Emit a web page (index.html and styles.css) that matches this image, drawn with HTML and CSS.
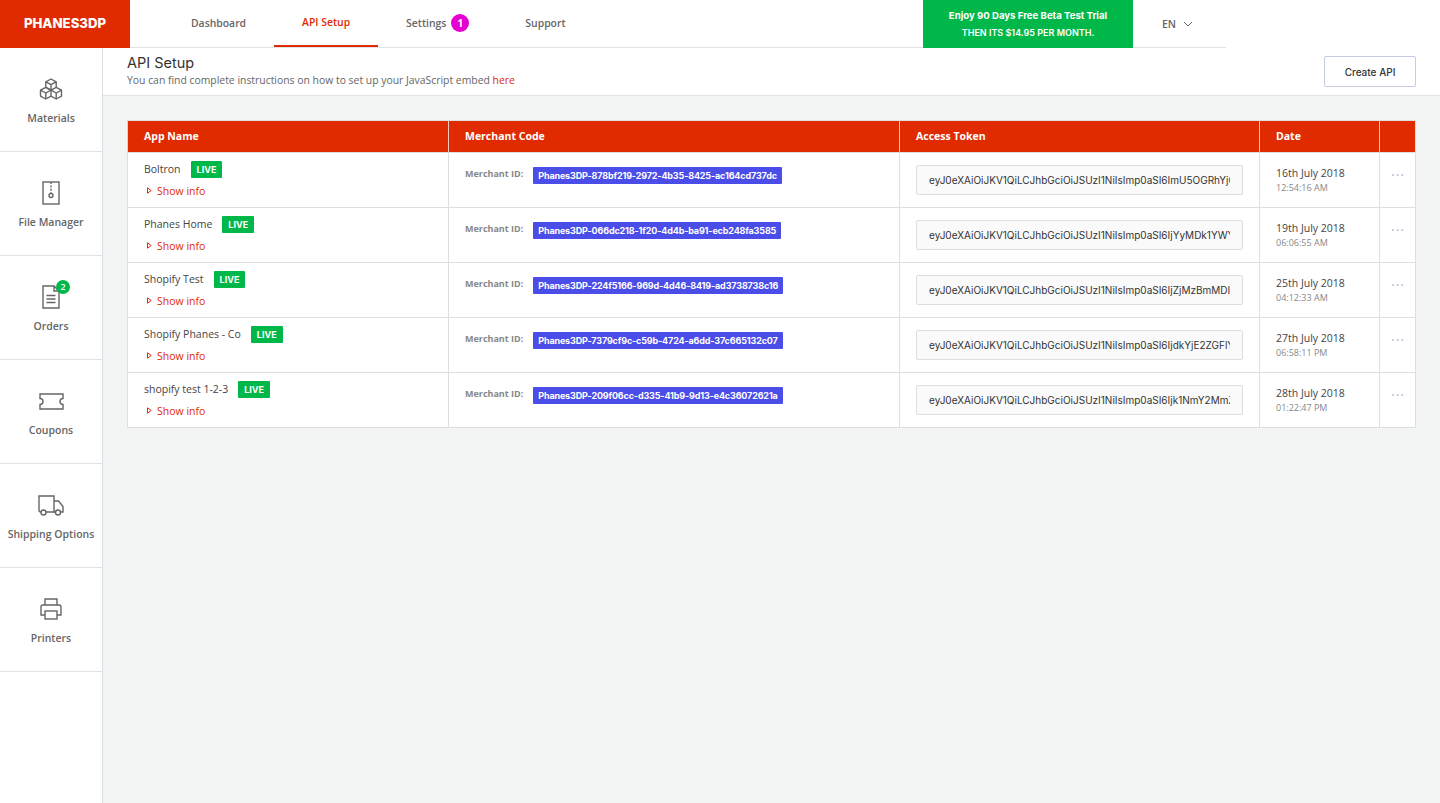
FILE: index.html
```html
<!DOCTYPE html>
<html lang="en">
<head>
    <meta charset="UTF-8">
    <meta name="viewport" content="width=device-width, initial-scale=1.0">
    <title>API Setup</title>
    <link rel="stylesheet" href="styles.css">
</head>
<body>
    <header class="topbar">
        <a class="logo" href="#">PHANES3DP</a>
        <nav class="main-nav">
            <a class="nav-link" href="#">Dashboard</a>
            <a class="nav-link active" href="#">API Setup</a>
            <a class="nav-link" href="#">Settings <span class="nav-badge">1</span></a>
            <a class="nav-link" href="#">Support</a>
        </nav>
        <div class="trial-box">
            <strong>Enjoy 90 Days Free Beta Test Trial</strong>
            <span>THEN ITS $14.95 PER MONTH.</span>
        </div>
        <div class="lang-select">
            EN
            <svg width="10" height="6" viewBox="0 0 10 6"><path d="M1 1l4 4 4-4" fill="none" stroke="#666" stroke-width="1"/></svg>
        </div>
    </header>

    <div class="layout">
        <aside class="sidebar">
            <a class="side-item" href="#">
                <span class="side-icon">
                    <svg width="24" height="22" viewBox="0 0 24 22" fill="none" stroke="#666" stroke-width="1.4" stroke-linejoin="round">
                        <path d="M12 1l5.200 2.800v5.600L12 12.200 6.800 9.400V3.800z"/>
                        <path d="M6.800 3.800L12 6.600l5.200-2.800M12 6.600v5.600"/>
                        <path d="M6.800 9.400L12 12.200v6L6.800 21l-5.300-2.800v-6z"/>
                        <path d="M1.500 12.200L6.800 15 12 12.200M6.800 15v6"/>
                        <path d="M17.200 9.400l5.300 2.800v6L17.200 21 12 18.200"/>
                        <path d="M12 12.200l5.200 2.800 5.300-2.800M17.200 15v6"/>
                    </svg>
                </span>
                Materials
            </a>
            <a class="side-item" href="#">
                <span class="side-icon">
                    <svg width="18" height="24" viewBox="0 0 18 24" fill="none" stroke="#666" stroke-width="1.4">
                        <rect x="1" y="1" width="16" height="22"/>
                        <path d="M9 1v11" stroke-dasharray="2 1.400"/>
                        <circle cx="9" cy="14.500" r="2"/>
                    </svg>
                </span>
                File Manager
            </a>
            <a class="side-item" href="#">
                <span class="side-icon">
                    <svg width="18" height="24" viewBox="0 0 18 24" fill="none" stroke="#666" stroke-width="1.4">
                        <path d="M12 1H1v22h16V6z"/>
                        <path d="M12 1v5h5"/>
                        <path d="M4.500 10.500h9M4.500 14h9M4.500 17.500h9"/>
                    </svg>
                    <span class="side-badge">2</span>
                </span>
                Orders
            </a>
            <a class="side-item" href="#">
                <span class="side-icon">
                    <svg width="25" height="17" viewBox="0 0 25 17" fill="none" stroke="#666" stroke-width="1.4">
                        <path d="M1 1h23v4.500a3 3 0 0 0 0 6V16H1v-4.500a3 3 0 0 0 0-6z"/>
                    </svg>
                </span>
                Coupons
            </a>
            <a class="side-item" href="#">
                <span class="side-icon">
                    <svg width="26" height="21" viewBox="0 0 26 21" fill="none" stroke="#666" stroke-width="1.4">
                        <path d="M3 17H2.500A1.500 1.500 0 0 1 1 15.500V1h15v16H8"/>
                        <path d="M16 6h4.500l4.500 5.500V17h-3M18 17h-2"/>
                        <circle cx="5.500" cy="17.500" r="2.500"/>
                        <circle cx="20" cy="17.500" r="2.500"/>
                    </svg>
                </span>
                Shipping Options
            </a>
            <a class="side-item" href="#">
                <span class="side-icon">
                    <svg width="22" height="22" viewBox="0 0 22 22" fill="none" stroke="#666" stroke-width="1.4">
                        <path d="M5 7V1h12v6"/>
                        <path d="M5 17H1V9a2 2 0 0 1 2-2h16a2 2 0 0 1 2 2v8h-4"/>
                        <rect x="5" y="13" width="12" height="8"/>
                    </svg>
                </span>
                Printers
            </a>
        </aside>

        <main class="content">
            <div class="page-head">
                <div class="page-title">
                    <h1>API Setup</h1>
                    <p>You can find complete instructions on how to set up your JavaScript embed <a href="#">here</a></p>
                </div>
                <button class="create-btn">Create API</button>
            </div>

            <div class="table-wrap">
                <table class="api-table">
                    <colgroup>
                        <col class="col-name">
                        <col class="col-code">
                        <col class="col-token">
                        <col class="col-date">
                        <col class="col-more">
                    </colgroup>
                    <thead>
                        <tr>
                            <th>App Name</th>
                            <th>Merchant Code</th>
                            <th>Access Token</th>
                            <th>Date</th>
                            <th></th>
                        </tr>
                    </thead>
                    <tbody>
                        <tr>
                            <td>
                                <div class="app-name">Boltron <span class="live">LIVE</span></div>
                                <a class="show-info" href="#"><svg width="5" height="7" viewBox="0 0 5 7"><path d="M.5.800v5.400L4.200 3.500z" fill="none" stroke="#e02b00"/></svg>Show info</a>
                            </td>
                            <td>
                                <div class="merchant"><span class="merchant-label">Merchant ID:</span> <span class="merchant-code">Phanes3DP-878bf219-2972-4b35-8425-ac164cd737dc</span></div>
                            </td>
                            <td><input class="token" readonly value="eyJ0eXAiOiJKV1QiLCJhbGciOiJSUzI1NiIsImp0aSI6ImU5OGRhYjQ4MDk1"></td>
                            <td>
                                <div class="date">16th July 2018</div>
                                <div class="time">12:54:16 AM</div>
                            </td>
                            <td class="more-cell"><span class="more">···</span></td>
                        </tr>
                        <tr>
                            <td>
                                <div class="app-name">Phanes Home <span class="live">LIVE</span></div>
                                <a class="show-info" href="#"><svg width="5" height="7" viewBox="0 0 5 7"><path d="M.5.800v5.400L4.200 3.500z" fill="none" stroke="#e02b00"/></svg>Show info</a>
                            </td>
                            <td>
                                <div class="merchant"><span class="merchant-label">Merchant ID:</span> <span class="merchant-code">Phanes3DP-066dc218-1f20-4d4b-ba91-ecb248fa3585</span></div>
                            </td>
                            <td><input class="token" readonly value="eyJ0eXAiOiJKV1QiLCJhbGciOiJSUzI1NiIsImp0aSI6IjYyMDk1YWY4ZTk1"></td>
                            <td>
                                <div class="date">19th July 2018</div>
                                <div class="time">06:06:55 AM</div>
                            </td>
                            <td class="more-cell"><span class="more">···</span></td>
                        </tr>
                        <tr>
                            <td>
                                <div class="app-name">Shopify Test <span class="live">LIVE</span></div>
                                <a class="show-info" href="#"><svg width="5" height="7" viewBox="0 0 5 7"><path d="M.5.800v5.400L4.200 3.500z" fill="none" stroke="#e02b00"/></svg>Show info</a>
                            </td>
                            <td>
                                <div class="merchant"><span class="merchant-label">Merchant ID:</span> <span class="merchant-code">Phanes3DP-224f5166-969d-4d46-8419-ad3738738c16</span></div>
                            </td>
                            <td><input class="token" readonly value="eyJ0eXAiOiJKV1QiLCJhbGciOiJSUzI1NiIsImp0aSI6IjZjMzBmMDI3ZTk1"></td>
                            <td>
                                <div class="date">25th July 2018</div>
                                <div class="time">04:12:33 AM</div>
                            </td>
                            <td class="more-cell"><span class="more">···</span></td>
                        </tr>
                        <tr>
                            <td>
                                <div class="app-name">Shopify Phanes - Co <span class="live">LIVE</span></div>
                                <a class="show-info" href="#"><svg width="5" height="7" viewBox="0 0 5 7"><path d="M.5.800v5.400L4.200 3.500z" fill="none" stroke="#e02b00"/></svg>Show info</a>
                            </td>
                            <td>
                                <div class="merchant"><span class="merchant-label">Merchant ID:</span> <span class="merchant-code">Phanes3DP-7379cf9c-c59b-4724-a6dd-37c665132c07</span></div>
                            </td>
                            <td><input class="token" readonly value="eyJ0eXAiOiJKV1QiLCJhbGciOiJSUzI1NiIsImp0aSI6IjdkYjE2ZGFlYTk1"></td>
                            <td>
                                <div class="date">27th July 2018</div>
                                <div class="time">06:58:11 PM</div>
                            </td>
                            <td class="more-cell"><span class="more">···</span></td>
                        </tr>
                        <tr>
                            <td>
                                <div class="app-name">shopify test 1-2-3 <span class="live">LIVE</span></div>
                                <a class="show-info" href="#"><svg width="5" height="7" viewBox="0 0 5 7"><path d="M.5.800v5.400L4.200 3.500z" fill="none" stroke="#e02b00"/></svg>Show info</a>
                            </td>
                            <td>
                                <div class="merchant"><span class="merchant-label">Merchant ID:</span> <span class="merchant-code">Phanes3DP-209f06cc-d335-41b9-9d13-e4c36072621a</span></div>
                            </td>
                            <td><input class="token" readonly value="eyJ0eXAiOiJKV1QiLCJhbGciOiJSUzI1NiIsImp0aSI6Ijk1NmY2MmZmZTk1"></td>
                            <td>
                                <div class="date">28th July 2018</div>
                                <div class="time">01:22:47 PM</div>
                            </td>
                            <td class="more-cell"><span class="more">···</span></td>
                        </tr>
                    </tbody>
                </table>
            </div>
        </main>
    </div>
</body>
</html>
```

FILE: styles.css
```css
* {
    box-sizing: border-box;
}

html, body {
    height: 100%;
}

body {
    margin: 0;
    background: #fff;
    color: #333;
    font-family: "Open Sans", Arial, sans-serif;
    font-size: 10.5px;
    overflow: hidden;
}

a {
    text-decoration: none;
    color: inherit;
}

/* top bar */
.topbar {
    display: flex;
    width: 1226px;
    height: 48px;
    border-bottom: 1px solid #e2e2e2;
}

.logo {
    width: 130px;
    height: 48px;
    background: #e02b00;
    color: #fff;
    font-family: Inter, Arial, sans-serif;
    font-size: 13.2px;
    font-weight: 800;
    line-height: 47px;
    text-align: center;
    flex-shrink: 0;
}

.main-nav {
    display: flex;
    margin-left: 33px;
    width: 760px;
}

.nav-link {
    display: flex;
    align-items: center;
    height: 47px;
    padding: 0 28px 1px;
    font-size: 10.4px;
    font-weight: 600;
    color: #666;
    gap: 5px;
    white-space: nowrap;
}

.nav-link.active {
    color: #e02b00;
    border-bottom: 2px solid #e02b00;
}

.nav-badge {
    width: 18px;
    height: 18px;
    border-radius: 50%;
    background: #e400d0;
    color: #fff;
    font-size: 10px;
    font-weight: 700;
    line-height: 18px;
    text-align: center;
}

.trial-box {
    width: 210px;
    height: 48px;
    background: #00b84a;
    color: #fff;
    font-family: Inter, Arial, sans-serif;
    font-size: 9px;
    font-weight: 600;
    text-align: center;
    display: flex;
    flex-direction: column;
    justify-content: center;
    gap: 6px;
    flex-shrink: 0;
}

.trial-box strong {
    font-size: 9.6px;
    font-weight: 700;
}

.lang-select {
    display: flex;
    align-items: center;
    gap: 7px;
    margin-left: 29px;
    height: 47px;
    font-size: 10.5px;
    font-weight: 600;
    color: #666;
}

/* main layout */
.layout {
    display: flex;
    height: 755px;
}

.sidebar {
    width: 103px;
    flex-shrink: 0;
    background: #fff;
    border-right: 1px solid #dcdfe8;
}

.side-item {
    display: flex;
    flex-direction: column;
    align-items: center;
    height: 104px;
    padding-top: 29px;
    border-bottom: 1px solid #e2e2e8;
    font-size: 10.5px;
    font-weight: 600;
    color: #666;
}

.side-icon {
    position: relative;
    display: flex;
    align-items: center;
    justify-content: center;
    height: 24px;
    margin-bottom: 10px;
}

.side-badge {
    position: absolute;
    top: -5px;
    left: 14px;
    width: 14px;
    height: 14px;
    border-radius: 50%;
    background: #00b84a;
    color: #fff;
    font-size: 9px;
    font-weight: 600;
    line-height: 14px;
    text-align: center;
}

.content {
    flex: 1;
    background: #f3f5f5;
}

.page-head {
    display: flex;
    justify-content: space-between;
    height: 48px;
    padding: 8px 24px 0;
    background: #fff;
    border-bottom: 1px solid #e2e2e2;
}

.page-title h1 {
    margin: -1px 0 0;
    font-family: Inter, Arial, sans-serif;
    font-size: 14.5px;
    font-weight: 400;
    line-height: 16px;
    color: #333;
}

.page-title p {
    margin: 2px 0 0;
    font-size: 10.4px;
    color: #666;
}

.page-title p a {
    color: #e02b00;
}

.create-btn {
    width: 92px;
    height: 31px;
    background: #fff;
    border: 1px solid #c6cbe4;
    border-radius: 2px;
    font-family: Inter, Arial, sans-serif;
    font-size: 10px;
    font-weight: 500;
    color: #333;
}

/* table */
.table-wrap {
    padding: 24px 24px 0;
}

.api-table {
    width: 1288px;
    table-layout: fixed;
    border-collapse: collapse;
    background: #fff;
    border: 1px solid #dedede;
}

.col-name { width: 321px; }
.col-code { width: 451px; }
.col-token { width: 360px; }
.col-date { width: 120px; }
.col-more { width: 36px; }

.api-table th {
    height: 32px;
    padding: 0 16px 2px;
    background: #e02b00;
    border-left: 1px solid #f3c9bd;
    color: #fff;
    font-size: 10.5px;
    font-weight: 700;
    text-align: left;
}

.api-table td {
    height: 55px;
    padding: 0 16px;
    border: 1px solid #dedede;
    vertical-align: middle;
}

.app-name {
    display: flex;
    align-items: center;
    gap: 10px;
    margin-top: -2px;
    font-size: 10.5px;
    color: #444;
}

.live {
    padding: 0 6px;
    height: 17px;
    line-height: 17px;
    background: #00b84a;
    border-radius: 1px;
    color: #fff;
    font-family: Inter, Arial, sans-serif;
    font-size: 9px;
    font-weight: 700;
}

.show-info {
    display: flex;
    align-items: center;
    gap: 5px;
    margin-top: 6px;
    padding-left: 3px;
    color: #e02b00;
    font-size: 10.5px;
}

.merchant {
    display: flex;
    align-items: flex-start;
    gap: 10px;
    margin-top: -10px;
}

.merchant-label {
    color: #888;
    font-size: 9px;
    font-weight: 700;
    line-height: 14px;
}

.merchant-code {
    height: 17px;
    padding: 0 5px;
    background: #4b4de8;
    border-radius: 1px;
    color: #fff;
    font-family: Inter, Arial, sans-serif;
    font-size: 9px;
    font-weight: 700;
    letter-spacing: -0.15px;
    line-height: 17px;
    white-space: nowrap;
}

.token {
    display: block;
    width: 327px;
    height: 30px;
    padding: 0 12px;
    background: #fafafa;
    border: 1px solid #dedede;
    border-radius: 2px;
    color: #333;
    font-family: Inter, Arial, sans-serif;
    font-size: 10px;
    outline: none;
}

.date {
    margin-top: -1px;
    font-size: 10.5px;
    color: #444;
}

.time {
    margin-top: 1px;
    font-size: 9px;
    color: #888;
}

.api-table .more-cell {
    padding-left: 11px;
}

.more {
    display: block;
    margin-top: -12px;
    color: #b4b8cc;
    font-size: 14px;
    letter-spacing: 1px;
}
```
